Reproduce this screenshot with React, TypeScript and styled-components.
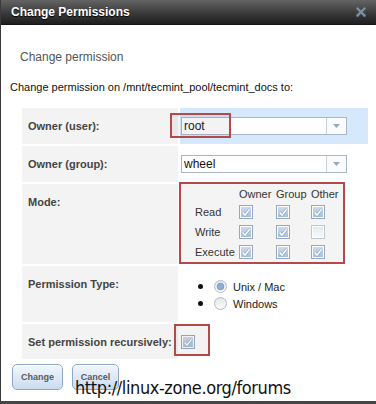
import styled, { createGlobalStyle } from "styled-components";

const GlobalStyle = createGlobalStyle`
body {
    margin: 0;
    background: #ffffff;
    font-family: "Liberation Sans", Arial, sans-serif;
}
`

const Dialog = styled.div`
position: relative;
width: 376px;
height: 404px;
box-sizing: border-box;
border-left: 1px solid #3a3a3a;
border-bottom: 3px solid #454545;
background: #ffffff;
overflow: hidden;
`

const TitleBar = styled.div`
height: 25px;
display: flex;
align-items: center;
justify-content: space-between;
padding: 0 10px 0 10px;
background: linear-gradient(#646464, #3a3a3a 55%, #1f1f1f);
border-bottom: 1px solid #151515;
box-sizing: border-box;
`

const Title = styled.span`
color: #ffffff;
font-size: 12px;
font-weight: bold;
text-shadow: 0 1px 1px #000;
`

const Body = styled.div`
padding: 0 9px;
`

const Heading = styled.div`
margin-top: 25px;
padding-left: 10px;
font-size: 12px;
line-height: 14px;
color: #555555;
`

const Intro = styled.div`
margin-top: 16px;
font-size: 11px;
line-height: 14px;
color: #111111;
`

const Form = styled.div`
margin: 14px 0 0 12px;
width: 346px;
display: flex;
flex-direction: column;
gap: 2px;
`

const Row = styled.div<{ $h: number }>`
display: flex;
gap: 2px;
height: ${p => p.$h}px;
`

const Label = styled.div`
width: 156px;
flex: none;
box-sizing: border-box;
padding: 11px 0 0 6px;
background: #f3f3f3;
font-size: 11px;
line-height: 14px;
font-weight: bold;
color: #444444;
`

const Value = styled.div<{ $highlight?: boolean; $top?: boolean }>`
position: relative;
flex: 1;
display: flex;
align-items: ${p => p.$top ? "flex-start" : "center"};
padding-left: 1px;
background: ${p => p.$highlight ? "#d6e8fc" : "#ffffff"};
`

const SelectBox = styled.div`
width: 166px;
height: 18px;
box-sizing: border-box;
display: flex;
border: 1px solid #a9b6c9;
background: #ffffff;
`

const SelectText = styled.span`
flex: 1;
padding-left: 2px;
font-size: 12px;
line-height: 16px;
color: #111111;
`

const SelectArrow = styled.span`
width: 19px;
display: flex;
align-items: center;
justify-content: center;
border-left: 1px solid #c9d1db;
background: #fafbfc;
`

const Annotation = styled.div<{ $left: number; $top: number; $w: number; $h: number }>`
position: absolute;
left: ${p => p.$left}px;
top: ${p => p.$top}px;
width: ${p => p.$w}px;
height: ${p => p.$h}px;
box-sizing: border-box;
border: 2px solid #b34a4a;
background: rgba(120, 120, 120, 0.09);
`

const ModeBox = styled.div`
margin: -2px 0 0 -2px;
width: 166px;
height: 82px;
box-sizing: border-box;
border: 2px solid #b34a4a;
background: #f4f4f4;
padding: 2px 0 0 14px;
display: grid;
grid-template-columns: 44px 37px 35px 1fr;
grid-template-rows: 16px 20px 20px 20px;
align-items: center;
font-size: 11px;
color: #333333;

svg {
    display: block;
}
`

const RadioList = styled.ul`
list-style: none;
margin: 0;
padding: 12px 0 0 0;
`

const RadioItem = styled.li`
display: flex;
align-items: center;
height: 17px;
font-size: 11px;
color: #222222;
`

const Bullet = styled.span`
display: block;
width: 5px;
height: 5px;
border-radius: 50%;
background: #111111;
margin: 0 11px 0 17px;
`

const RadioLabel = styled.span`
margin-left: 6px;
`

const Buttons = styled.div`
display: flex;
gap: 9px;
margin: 5px 0 0 2px;
`

const Button = styled.button<{ $w: number }>`
width: ${p => p.$w}px;
height: 26px;
padding: 0;
border: 1px solid #8fa7c7;
border-radius: 5px;
background: linear-gradient(#f1f6fc, #dbe7f5 60%, #c9dbf0);
box-shadow: inset 0 1px 0 #ffffff;
font-family: "Liberation Sans", Arial, sans-serif;
font-size: 9px;
font-weight: bold;
color: #5a5a5a;
`

const Watermark = styled.div`
position: absolute;
left: 74px;
top: 377px;
font-family: "DejaVu Sans Condensed", "DejaVu Sans", sans-serif;
font-stretch: condensed;
font-size: 18px;
letter-spacing: -0.4px;
color: #111111;
`

const CloseIcon = () => (
    <svg width="10" height="10" viewBox="0 0 10 10">
        <path d="M1.5 1.5 L8.5 8.5 M8.5 1.5 L1.5 8.5" stroke="#46525e" strokeWidth="3.4" strokeLinecap="square"/>
        <path d="M1.5 1.5 L8.5 8.5 M8.5 1.5 L1.5 8.5" stroke="#7f91a3" strokeWidth="2" strokeLinecap="square"/>
    </svg>
)

const Checkbox = ({ checked }: { checked: boolean }) => (
    <svg width="14" height="14" viewBox="0 0 14 14">
        <defs>
            <linearGradient id="cbOn" x1="0" y1="0" x2="0" y2="1">
                <stop offset="0" stopColor="#cddcec"/>
                <stop offset="1" stopColor="#a7bfd9"/>
            </linearGradient>
            <linearGradient id="cbOff" x1="0" y1="0" x2="0" y2="1">
                <stop offset="0" stopColor="#e6e9ec"/>
                <stop offset="1" stopColor="#f8f9fa"/>
            </linearGradient>
        </defs>
        <rect x="0.5" y="0.5" width="13" height="13" fill="#ffffff" stroke={checked ? "#97a9bf" : "#bfc6cf"}/>
        <rect x="2" y="2" width="10" height="10" fill={checked ? "url(#cbOn)" : "url(#cbOff)"}/>
        {checked && (
            <>
                <path d="M3.6 7.6 L6 10 L10.6 4.2" fill="none" stroke="#7f9cc0" strokeWidth="2.6"/>
                <path d="M3.6 7.6 L6 10 L10.6 4.2" fill="none" stroke="#ffffff" strokeWidth="1.5"/>
            </>
        )}
    </svg>
)

const Radio = ({ checked }: { checked: boolean }) => (
    <svg width="13" height="13" viewBox="0 0 13 13">
        <defs>
            <linearGradient id="rdOff" x1="0" y1="0" x2="0" y2="1">
                <stop offset="0" stopColor="#e4e7ea"/>
                <stop offset="1" stopColor="#fbfbfc"/>
            </linearGradient>
        </defs>
        <circle cx="6.5" cy="6.5" r="6" fill="url(#rdOff)" stroke="#b2b9c2"/>
        {checked && <circle cx="6.5" cy="6.5" r="3.3" fill="#8eb0d6" stroke="#6d8fb8" strokeWidth="0.8"/>}
    </svg>
)

const Select = ({ value }: { value: string }) => (
    <SelectBox>
        <SelectText>{value}</SelectText>
        <SelectArrow>
            <svg width="7" height="4" viewBox="0 0 7 4">
                <path d="M0 0 L7 0 L3.5 4 Z" fill="#9aa8ba"/>
            </svg>
        </SelectArrow>
    </SelectBox>
)

const modes = [
    { name: "Read", bits: [true, true, true] },
    { name: "Write", bits: [true, true, false] },
    { name: "Execute", bits: [true, true, true] },
]

const App = () => {
    return (
        <Dialog>
            <GlobalStyle/>
            <TitleBar>
                <Title>Change Permissions</Title>
                <CloseIcon/>
            </TitleBar>
            <Body>
                <Heading>Change permission</Heading>
                <Intro>Change permission on /mnt/tecmint_pool/tecmint_docs to:</Intro>
                <Form>
                    <Row $h={36}>
                        <Label>Owner (user):</Label>
                        <Value $highlight>
                            <Select value="root"/>
                            <Annotation $left={-10} $top={5} $w={61} $h={25}/>
                        </Value>
                    </Row>
                    <Row $h={36}>
                        <Label>Owner (group):</Label>
                        <Value>
                            <Select value="wheel"/>
                        </Value>
                    </Row>
                    <Row $h={80}>
                        <Label>Mode:</Label>
                        <Value $top>
                            <ModeBox>
                                <span/>
                                <span>Owner</span>
                                <span>Group</span>
                                <span>Other</span>
                                {modes.map(m => [
                                    <span key={m.name}>{m.name}</span>,
                                    ...m.bits.map((b, i) => (
                                        <Checkbox key={m.name + i} checked={b}/>
                                    )),
                                ])}
                            </ModeBox>
                        </Value>
                    </Row>
                    <Row $h={56}>
                        <Label>Permission Type:</Label>
                        <Value $top>
                            <RadioList>
                                <RadioItem>
                                    <Bullet/>
                                    <Radio checked/>
                                    <RadioLabel>Unix / Mac</RadioLabel>
                                </RadioItem>
                                <RadioItem>
                                    <Bullet/>
                                    <Radio checked={false}/>
                                    <RadioLabel>Windows</RadioLabel>
                                </RadioItem>
                            </RadioList>
                        </Value>
                    </Row>
                    <Row $h={35}>
                        <Label>Set permission recursively:</Label>
                        <Value>
                            <Annotation $left={-6} $top={0} $w={36} $h={32}/>
                            <Checkbox checked/>
                        </Value>
                    </Row>
                </Form>
                <Buttons>
                    <Button $w={51}>Change</Button>
                    <Button $w={47}>Cancel</Button>
                </Buttons>
            </Body>
            <Watermark>http://linux-zone.org/forums</Watermark>
        </Dialog>
    );
}

export default App;
